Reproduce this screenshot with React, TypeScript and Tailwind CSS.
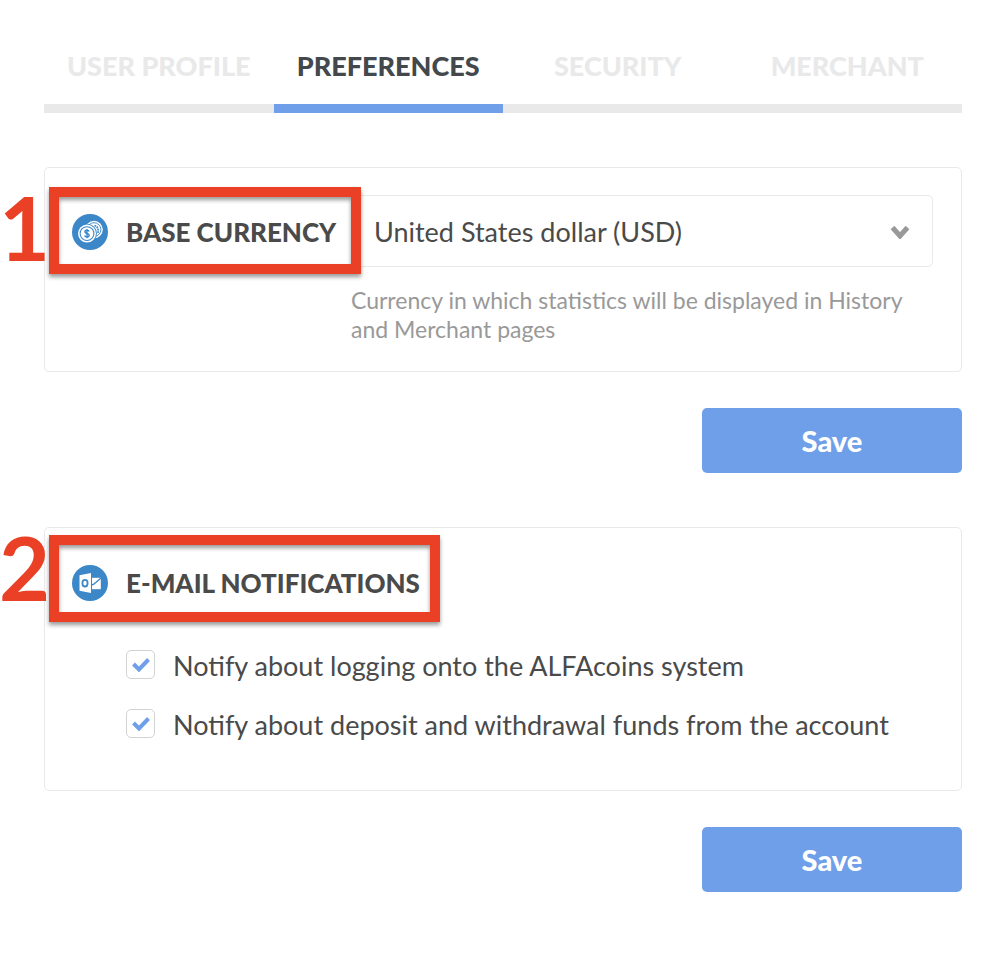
import { useState } from "react";

const TABS = ["User profile", "Preferences", "Security", "Merchant"];

const CURRENCIES = [
  { code: "USD", label: "United States dollar (USD)" },
  { code: "EUR", label: "Euro (EUR)" },
];

function CoinsIcon() {
  return (
    <svg viewBox="0 0 36 36" className="size-9 shrink-0" aria-hidden="true">
      <circle cx="18" cy="18" r="18" fill="#3b87c8" />
      <circle cx="22" cy="15.600" r="8.800" fill="#fff" />
      <circle cx="22" cy="15.600" r="6.900" fill="none" stroke="#3b87c8" strokeWidth="0.900" />
      <path d="M22.500 11.500c3 .8 4.500 4 3.300 8" fill="none" stroke="#3b87c8" strokeWidth="1.800" strokeDasharray="1.600 0.900" />
      <circle cx="15" cy="19.600" r="9.900" fill="#3b87c8" />
      <circle cx="15" cy="19.600" r="9" fill="#fff" />
      <circle cx="15" cy="19.600" r="6.900" fill="none" stroke="#3b87c8" strokeWidth="1.100" />
      <path
        d="M17.200 17.500c-.4-.9-1.200-1.200-2.200-1.200-1.300 0-2.100.6-2.100 1.500 0 2.200 4.300 1.200 4.300 3.500 0 1-.9 1.600-2.200 1.600-1.100 0-2-.4-2.400-1.300M15 15v9.200"
        fill="none"
        stroke="#3b87c8"
        strokeWidth="1.400"
      />
    </svg>
  );
}

function MailIcon() {
  return (
    <svg viewBox="0 0 36 36" className="size-9 shrink-0" aria-hidden="true">
      <circle cx="18" cy="18" r="18" fill="#3b87c8" />
      <path d="M7.500 10.300 19 8v20L7.500 25.700z" fill="#fff" />
      <ellipse cx="13" cy="18.200" rx="2.600" ry="3.300" fill="none" stroke="#3b87c8" strokeWidth="1.800" />
      <path d="M20 12.800h8.800v11.400H20z" fill="#fff" />
      <path d="m19.500 20 2.300-.8 7.200-6.200" fill="none" stroke="#3b87c8" strokeWidth="1.400" />
    </svg>
  );
}

// red frame over a heading, with its step number in the page margin
function Callout({ step, className, numberClass }: { step: number; className: string; numberClass: string }) {
  return (
    <div className={`pointer-events-none absolute ${className}`}>
      <span className={`absolute -left-[50px] text-[88px] leading-none font-bold text-[#ea4026] ${numberClass}`}>
        {step}
      </span>
      <div className="absolute inset-0 border-10 border-[#ea4026] drop-shadow-[0_3px_2px_rgba(0,0,0,0.4)]" />
    </div>
  );
}

function SaveButton() {
  return (
    <div className="mt-9 flex justify-end">
      <button
        type="submit"
        className="h-[65px] w-[260px] rounded-[5px] bg-[#709fea] text-[29px] font-black text-white hover:bg-[#5f91e2]"
      >
        Save
      </button>
    </div>
  );
}

function CheckRow({ label }: { label: string }) {
  const [checked, setChecked] = useState(true);

  return (
    <label className="flex items-start gap-[18px] text-[27px] leading-[31px]">
      <span className="grid size-[29px] shrink-0 place-items-center">
        <input
          type="checkbox"
          checked={checked}
          onChange={(e) => setChecked(e.target.checked)}
          className="col-start-1 row-start-1 size-[29px] appearance-none rounded-[5px] border border-[#d2d2d2] bg-white"
        />
        {checked && (
          <svg viewBox="0 0 18 14" className="pointer-events-none col-start-1 row-start-1 h-3.5 w-[18px]" aria-hidden="true">
            <path d="m1.500 6 5.500 5.500L16.500 1.500" fill="none" stroke="#709fea" strokeWidth="4" />
          </svg>
        )}
      </span>
      {label}
    </label>
  );
}

export default function App() {
  const [tab, setTab] = useState("Preferences");
  const [currency, setCurrency] = useState("USD");

  return (
    <main className="min-h-screen bg-white pt-7 pr-[46px] pb-16 pl-11 font-['Lato',sans-serif] text-[#4a4a4a]">
      <nav className="grid grid-cols-4">
        {TABS.map((t) => (
          <a
            key={t}
            href="#"
            onClick={() => setTab(t)}
            className={[
              "flex h-[85px] items-center justify-center border-b-9 text-[27px] font-black uppercase",
              t === tab
                ? "border-[#709fea] text-[#43484d]"
                : "border-[#e9e9e9] text-[#e9e9e9]",
            ].join(" ")}
          >
            {t}
          </a>
        ))}
      </nav>

      <form className="mt-[54px]" onSubmit={(e) => e.preventDefault()}>
        <section className="flex rounded-[5px] border border-[#e9e9e9] p-[27px] pr-7">
          <div className="relative z-10 flex h-[74px] w-[279px] shrink-0 items-center gap-[18px]">
            <CoinsIcon />
            <label htmlFor="currency" className="text-[26px] font-black whitespace-nowrap uppercase">
              Base currency
            </label>
            <Callout
              step={1}
              className="-top-2 -right-2.5 -bottom-[5px] -left-[23px]"
              numberClass="-top-1"
            />
          </div>

          <div className="min-w-0 flex-1">
            <div className="grid items-center">
              <select
                id="currency"
                value={currency}
                onChange={(e) => setCurrency(e.target.value)}
                className="col-start-1 row-start-1 h-[72px] w-full appearance-none rounded-[5px] border border-[#e9e9e9] bg-white pt-0.5 pr-16 pl-[22px] text-[27px]"
              >
                {CURRENCIES.map((c) => (
                  <option key={c.code} value={c.code}>
                    {c.label}
                  </option>
                ))}
              </select>
              <svg
                viewBox="0 0 20 16"
                className="pointer-events-none col-start-1 row-start-1 mr-[23px] h-4 w-5 justify-self-end"
                aria-hidden="true"
              >
                <path d="m2.500 4.500 7.500 8.500 7.500-8.500" fill="none" stroke="#999" strokeWidth="5" />
              </svg>
            </div>
            <p className="mt-[19px] text-[23px] leading-[29px] text-[#999]">
              Currency in which statistics will be displayed in History and Merchant pages
            </p>
          </div>
        </section>
        <SaveButton />
      </form>

      <form className="mt-[54px]" onSubmit={(e) => e.preventDefault()}>
        <section className="rounded-[5px] border border-[#e9e9e9] px-[27px] pt-[27px] pb-[50px]">
          <div className="relative flex h-14 w-[358px] items-center gap-[18px]">
            <MailIcon />
            <h2 className="text-[26px] font-black whitespace-nowrap uppercase">E-mail notifications</h2>
            <Callout
              step={2}
              className="-top-5 -right-2.5 -bottom-[11px] -left-[23px]"
              numberClass="-top-3"
            />
          </div>

          <div className="mt-[39px] flex flex-col gap-7 pl-[54px]">
            <CheckRow label="Notify about logging onto the ALFAcoins system" />
            <CheckRow label="Notify about deposit and withdrawal funds from the account" />
          </div>
        </section>
        <SaveButton />
      </form>
    </main>
  );
}
